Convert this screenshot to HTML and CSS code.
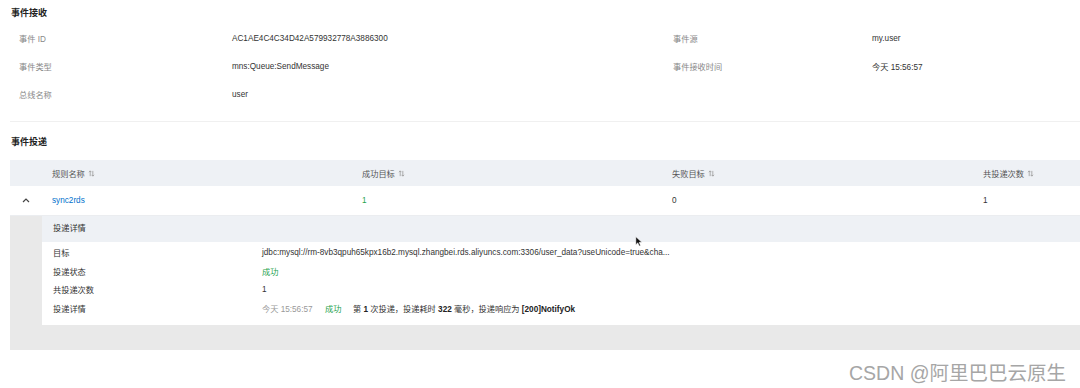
FILE: index.html
```html
<!DOCTYPE html>
<html lang="en">
<head>
    <meta charset="UTF-8">
    <title>事件详情</title>
    <link rel="stylesheet" href="styles.css">
</head>
<body>
    <div class="page">
        <div class="section-title">事件接收</div>
        <div class="info-grid">
            <div class="info-label">事件 ID</div>
            <div class="info-value">AC1AE4C4C34D42A579932778A3886300</div>
            <div class="info-label">事件源</div>
            <div class="info-value">my.user</div>

            <div class="info-label">事件类型</div>
            <div class="info-value">mns:Queue:SendMessage</div>
            <div class="info-label">事件接收时间</div>
            <div class="info-value">今天 15:56:57</div>

            <div class="info-label">总线名称</div>
            <div class="info-value">user</div>
            <div></div>
            <div></div>
        </div>
        <div class="divider"></div>

        <div class="section-title delivery">事件投递</div>
        <div class="table">
            <div class="table-row table-head">
                <div class="cell expand"></div>
                <div class="cell">规则名称 <svg class="sort" viewBox="0 0 8 8"><path d="M2.5 7V1M1 2.5L2.5 1 4 2.5M5.5 1v6M4 5.5L5.5 7 7 5.5"/></svg></div>
                <div class="cell">成功目标 <svg class="sort" viewBox="0 0 8 8"><path d="M2.5 7V1M1 2.5L2.5 1 4 2.5M5.5 1v6M4 5.5L5.5 7 7 5.5"/></svg></div>
                <div class="cell">失败目标 <svg class="sort" viewBox="0 0 8 8"><path d="M2.5 7V1M1 2.5L2.5 1 4 2.5M5.5 1v6M4 5.5L5.5 7 7 5.5"/></svg></div>
                <div class="cell">共投递次数 <svg class="sort" viewBox="0 0 8 8"><path d="M2.5 7V1M1 2.5L2.5 1 4 2.5M5.5 1v6M4 5.5L5.5 7 7 5.5"/></svg></div>
            </div>
            <div class="table-row table-body">
                <div class="cell expand"><svg class="chevron" viewBox="0 0 8 5"><path d="M1 4L4 1 7 4"/></svg></div>
                <div class="cell"><a class="link">sync2rds</a></div>
                <div class="cell success">1</div>
                <div class="cell">0</div>
                <div class="cell">1</div>
            </div>
            <div class="expanded">
                <div class="detail-card">
                    <div class="detail-head">投递详情</div>
                    <div class="detail-body">
                        <div class="detail-row">
                            <div class="detail-label">目标</div>
                            <div class="detail-value">jdbc:mysql://rm-8vb3qpuh65kpx16b2.mysql.zhangbei.rds.aliyuncs.com:3306/user_data?useUnicode=true&amp;cha...</div>
                        </div>
                        <div class="detail-row">
                            <div class="detail-label">投递状态</div>
                            <div class="detail-value status-ok">成功</div>
                        </div>
                        <div class="detail-row">
                            <div class="detail-label">共投递次数</div>
                            <div class="detail-value">1</div>
                        </div>
                        <div class="detail-row">
                            <div class="detail-label">投递详情</div>
                            <div class="detail-value log">
                                <span class="log-time">今天 15:56:57</span>
                                <span class="log-status">成功</span>
                                <span>第 <b>1</b> 次投递，投递耗时 <b>322</b> 毫秒，投递响应为 <b>[200]NotifyOk</b></span>
                            </div>
                        </div>
                    </div>
                </div>
            </div>
        </div>
    </div>

    <svg class="cursor" viewBox="0 0 10 14"><path d="M1 1v10l2.5-2.3 1.8 4 1.6-.7-1.8-3.9H8.5z"/></svg>
    <div class="watermark">CSDN @阿里巴巴云原生</div>
</body>
</html>
```

FILE: styles.css
```css
* {
    margin: 0;
    padding: 0;
    box-sizing: border-box;
}
body {
    width: 1080px;
    height: 388px;
    background: #fff;
    color: #333;
    font-family: "Liberation Sans", "Noto Sans CJK SC", sans-serif;
    font-size: 8.2px;
    overflow: hidden;
    position: relative;
}
.page {
    padding-left: 10px;
    overflow: hidden;
}
.section-title {
    height: 24px;
    line-height: 26px;
    padding-left: 1px;
    font-size: 9px;
    font-weight: bold;
    color: #222;
}
.section-title.delivery {
    height: 38px;
    line-height: 40px;
}
.info-grid {
    display: grid;
    grid-template-columns: 213px 441px 199px 1fr;
    grid-auto-rows: 28px;
    align-items: center;
    padding-left: 9px;
}
.info-label {
    color: #888;
}
.info-value {
    color: #333;
}
.divider {
    margin-top: 13px;
    height: 1px;
    background: #f0f0f0;
}
.table {
    width: 1284px;
}
.table-row {
    display: grid;
    grid-template-columns: 32px 310px 310px 311px 321px;
    align-items: center;
}
.table-head {
    height: 26px;
    background: #eef1f5;
    color: #555;
}
.table-body {
    height: 30px;
    border-bottom: 1px solid #ebedf0;
}
.cell {
    padding-left: 10px;
    display: flex;
    align-items: center;
    gap: 3px;
}
.cell.expand {
    padding-left: 12px;
}
.sort {
    width: 7px;
    height: 7px;
    fill: none;
    stroke: #999;
    stroke-width: 0.9;
}
.chevron {
    width: 8px;
    height: 5px;
    fill: none;
    stroke: #444;
    stroke-width: 1.2;
}
.link {
    color: #0070cc;
}
.cell.success {
    color: #1fa34e;
}
.expanded {
    background: #e9e9e9;
    padding: 0 0 25px 32px;
}
.detail-card {
    background: #fff;
}
.detail-head {
    height: 26px;
    line-height: 26px;
    padding-left: 11px;
    background: #eef1f5;
    color: #333;
}
.detail-body {
    padding: 1px 0 8px 11px;
}
.detail-row {
    display: flex;
    height: 18.5px;
    align-items: center;
}
.detail-label {
    width: 209px;
    color: #333;
}
.detail-value {
    color: #333;
}
.detail-value.status-ok,
.log-status {
    color: #1fa34e;
}
.log {
    display: flex;
}
.log-time {
    color: #999;
    width: 63px;
}
.log-status {
    width: 28px;
}
.log b {
    color: #222;
}
.cursor {
    position: absolute;
    left: 635px;
    top: 236px;
    width: 8px;
    height: 11px;
    fill: #111;
    stroke: #fff;
    stroke-width: 0.6;
}
.watermark {
    position: absolute;
    right: 14px;
    top: 357px;
    font-size: 19.5px;
    color: #a6a6a6;
    text-shadow: 0 0 1px #fff;
}
```
